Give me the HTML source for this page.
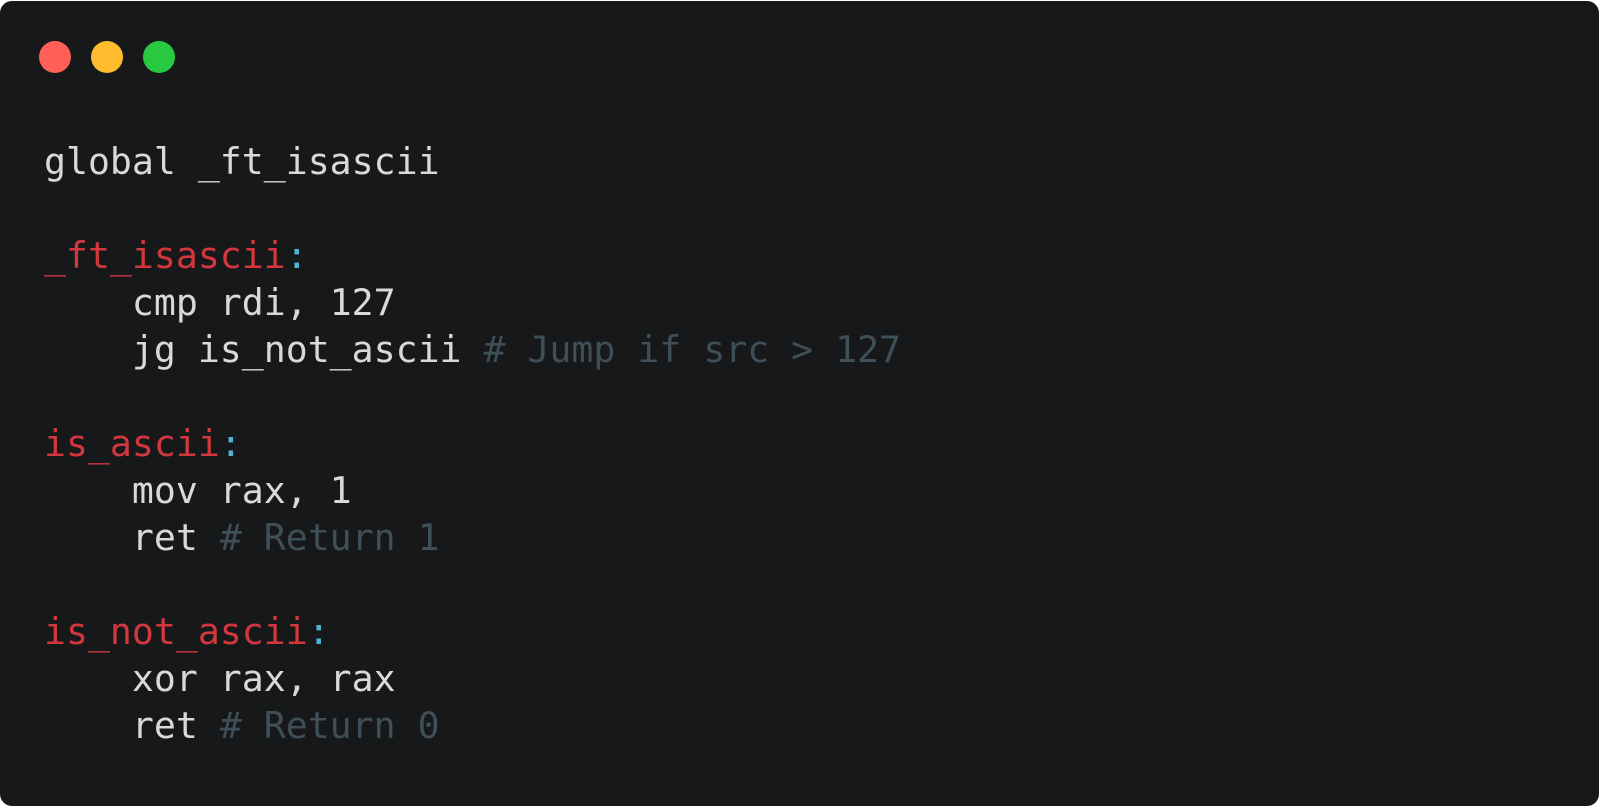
<!DOCTYPE html>
<html><head><meta charset="utf-8"><style>
html,body{margin:0;padding:0;background:#fff;width:1600px;height:808px;overflow:hidden}
.card{position:absolute;left:0;top:1px;width:1599px;height:805px;background:#17181a;border-radius:12px}
.dot{position:absolute;top:40px;width:32px;height:32px;border-radius:50%}
pre{position:absolute;left:44px;top:137px;margin:0;font-family:"DejaVu Sans Mono","Liberation Mono",monospace;font-size:36.5px;line-height:47px;color:#d9d9d9}
.r{color:#d1373d}.b{color:#4fb4d8}.c{color:#3e4f57}
</style></head><body>
<div class="card">
<div class="dot" style="left:39px;background:#ff5f57"></div>
<div class="dot" style="left:91px;background:#febc2e"></div>
<div class="dot" style="left:143px;background:#28c840"></div>
<pre>global _ft_isascii

<span class="r">_ft_isascii</span><span class="b">:</span>
    cmp rdi, 127
    jg is_not_ascii <span class="c"># Jump if src &gt; 127</span>

<span class="r">is_ascii</span><span class="b">:</span>
    mov rax, 1
    ret <span class="c"># Return 1</span>

<span class="r">is_not_ascii</span><span class="b">:</span>
    xor rax, rax
    ret <span class="c"># Return 0</span></pre>
</div>
</body></html>
